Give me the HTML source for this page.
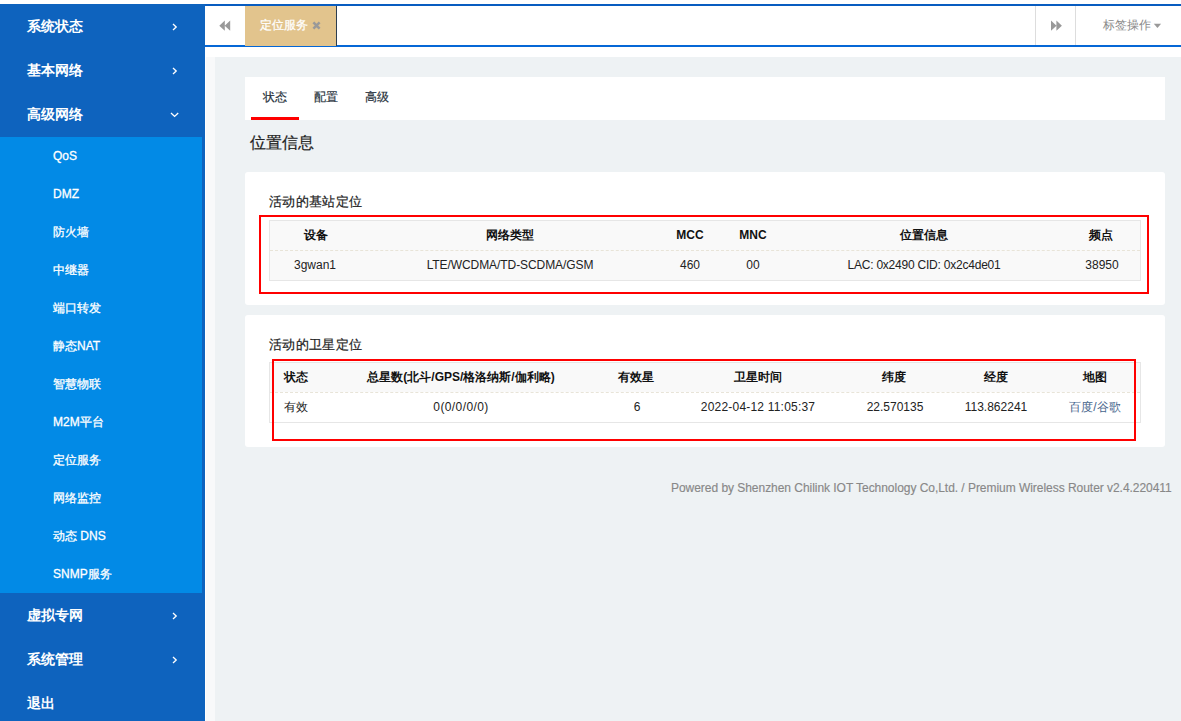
<!DOCTYPE html>
<html><head><meta charset="utf-8">
<style>
*{box-sizing:border-box;margin:0;padding:0}
html,body{width:1181px;height:721px;overflow:hidden;background:#fff;font-family:"Liberation Sans",sans-serif;position:relative}
.abs{position:absolute}
#side{position:absolute;left:0;top:4px;width:205px;height:717px;background:#0e63be;overflow:hidden}
.mi{position:relative;height:44px;color:#fff;font-weight:bold;font-size:14px;line-height:44px;padding-left:27px}
.mi .ch{position:absolute;left:172px;top:19.3px}
.mi .chd{position:absolute;left:170.2px;top:20px}
#sub{background:#028ae6;width:202px}
.si{height:38px;line-height:38px;color:#fff;font-size:12px;padding-left:53px;font-weight:500;-webkit-text-stroke:0.3px #fff}
#tabbar{position:absolute;left:205px;top:4px;width:976px;height:43px;border-top:2px solid #085cc0;border-bottom:2px solid #0567d6;background:#fff}
#content{position:absolute;left:205px;top:47px;width:976px;height:674px;background:#fff}
#bg1{position:absolute;left:1px;top:10px;width:10px;height:664px;background:#f8f9fa}
#bg2{position:absolute;left:10px;top:10px;width:966px;height:664px;background:#eef2f4}
.card{position:absolute;background:#fff;border-radius:3px}
.tab{font-size:12px;line-height:18px;color:#2a3440;-webkit-text-stroke:0.2px #2a3440}
.ttl{font-size:13.4px;letter-spacing:0.35px;line-height:18px;color:#222;-webkit-text-stroke:0.2px #222;white-space:nowrap}
.th{width:200px;text-align:center;font-size:12px;font-weight:bold;line-height:18px;color:#111;white-space:nowrap}
.td{width:200px;text-align:center;font-size:12px;line-height:18px;color:#222;white-space:nowrap}
</style></head><body>
<div id="side">
  <div class="mi">系统状态<svg class="ch" width="6" height="8" viewBox="0 0 6 8"><path d="M1 1 L4.2 4 L1 7" stroke="#fff" stroke-width="1.35" fill="none"/></svg></div>
  <div class="mi">基本网络<svg class="ch" width="6" height="8" viewBox="0 0 6 8"><path d="M1 1 L4.2 4 L1 7" stroke="#fff" stroke-width="1.35" fill="none"/></svg></div>
  <div class="mi">高级网络<svg class="chd" width="9" height="6" viewBox="0 0 9 6"><path d="M1 1 L4.6 4.4 L8.2 1" stroke="#fff" stroke-width="1.35" fill="none"/></svg></div>
  <div id="sub" style="margin-top:1px">
    <div class="si">QoS</div>
    <div class="si">DMZ</div>
    <div class="si">防火墙</div>
    <div class="si">中继器</div>
    <div class="si">端口转发</div>
    <div class="si">静态NAT</div>
    <div class="si">智慧物联</div>
    <div class="si">M2M平台</div>
    <div class="si">定位服务</div>
    <div class="si">网络监控</div>
    <div class="si">动态 DNS</div>
    <div class="si">SNMP服务</div>
  </div>
  <div class="mi">虚拟专网<svg class="ch" width="6" height="8" viewBox="0 0 6 8"><path d="M1 1 L4.2 4 L1 7" stroke="#fff" stroke-width="1.35" fill="none"/></svg></div>
  <div class="mi">系统管理<svg class="ch" width="6" height="8" viewBox="0 0 6 8"><path d="M1 1 L4.2 4 L1 7" stroke="#fff" stroke-width="1.35" fill="none"/></svg></div>
  <div class="mi">退出</div>
</div>
<div id="tabbar">
  <div class="abs" style="left:0;top:0;width:40px;height:39px;text-align:center">
    <svg class="abs" style="left:14px;top:14px" width="12" height="12" viewBox="0 0 12 12"><path d="M5.8 0.6 L0.3 5.65 L5.8 10.7 Z M11.2 0.6 L5.7 5.65 L11.2 10.7 Z" fill="#999"/></svg>
  </div>
  <div class="abs" id="acttab" style="left:40px;top:0;width:92px;height:40px;background:#e2c48d;border-right:1px solid #2c3e50;color:#fff;-webkit-text-stroke:0.25px #fff;font-size:12px;line-height:39px;padding-left:15px">定位服务</div>
  <svg class="abs" style="left:106.5px;top:14.5px" width="9" height="9" viewBox="0 0 9 9"><path d="M1.4 1.4 L7.6 7.6 M7.6 1.4 L1.4 7.6" stroke="#999" stroke-width="2.6" stroke-linecap="butt"/></svg>
  <div class="abs" style="left:830px;top:0;width:1px;height:39px;background:#ddd"></div>
  <div class="abs" style="left:870px;top:0;width:1px;height:39px;background:#ddd"></div>
  <svg class="abs" style="left:846px;top:14px" width="12" height="12" viewBox="0 0 12 12"><path d="M0 0.6 L5.5 5.65 L0 10.7 Z M5.4 0.6 L10.9 5.65 L5.4 10.7 Z" fill="#999"/></svg>
  <div class="abs" style="left:898px;top:0;height:39px;line-height:39px;font-size:12px;color:#888">标签操作</div>
  <svg class="abs" style="left:948px;top:17px" width="9" height="6" viewBox="0 0 9 6"><path d="M0.8 0.8 L8.1 0.8 L4.45 5 Z" fill="#999"/></svg>
</div>
<div id="content">
  <div id="bg1"></div><div id="bg2"></div>
</div>
<div class="abs" style="left:245px;top:77px;width:920px;height:43px;background:#fff"></div>
<div class="abs tab" style="left:263px;top:88px">状态</div>
<div class="abs tab" style="left:314px;top:88px">配置</div>
<div class="abs tab" style="left:365px;top:88px">高级</div>
<div class="abs" style="left:251px;top:117px;width:48px;height:3px;background:#f00"></div>
<div class="abs" style="left:250px;top:132px;font-size:16px;line-height:22px;color:#222;-webkit-text-stroke:0.2px #222">位置信息</div>

<div class="card" style="left:245px;top:172px;width:920px;height:133px"></div>
<div class="abs ttl" style="left:269px;top:193px">活动的基站定位</div>
<div class="abs" style="left:269px;top:220px;width:872px;height:61px;background:#f9f9f9;border:1px solid #e6e6e6"></div>
<div class="abs" style="left:270px;top:250px;width:870px;height:0;border-top:1px dashed #e8e4d8"></div>
<div class="abs" style="left:259px;top:215px;width:890px;height:79px;border:2px solid #f00"></div>
<div class="abs th" style="left:216px;top:226px">设备</div>
<div class="abs th" style="left:410px;top:226px">网络类型</div>
<div class="abs th" style="left:590px;top:226px">MCC</div>
<div class="abs th" style="left:653px;top:226px">MNC</div>
<div class="abs th" style="left:824px;top:226px">位置信息</div>
<div class="abs th" style="left:1001px;top:226px">频点</div>
<div class="abs td" style="left:215px;top:256px">3gwan1</div>
<div class="abs td" style="left:410px;top:256px;letter-spacing:-0.08px">LTE/WCDMA/TD-SCDMA/GSM</div>
<div class="abs td" style="left:590px;top:256px">460</div>
<div class="abs td" style="left:653px;top:256px">00</div>
<div class="abs td" style="left:824px;top:256px;letter-spacing:-0.22px">LAC: 0x2490 CID: 0x2c4de01</div>
<div class="abs td" style="left:1002px;top:256px">38950</div>

<div class="card" style="left:245px;top:315px;width:920px;height:132px"></div>
<div class="abs ttl" style="left:269px;top:336px">活动的卫星定位</div>
<div class="abs" style="left:269px;top:362px;width:872px;height:61px;background:#fff;border:1px solid #e6e6e6"></div>
<div class="abs" style="left:270px;top:363px;width:870px;height:29px;background:#f9f9f9"></div>
<div class="abs" style="left:270px;top:392px;width:870px;height:0;border-top:1px dashed #e8e4d8"></div>
<div class="abs" style="left:272px;top:359px;width:864px;height:82px;border:2px solid #f00"></div>
<div class="abs th" style="left:284px;top:368px;width:auto;text-align:left">状态</div>
<div class="abs th" style="left:361px;top:368px">总星数(北斗/GPS/格洛纳斯/伽利略)</div>
<div class="abs th" style="left:536px;top:368px">有效星</div>
<div class="abs th" style="left:658px;top:368px">卫星时间</div>
<div class="abs th" style="left:794px;top:368px">纬度</div>
<div class="abs th" style="left:896px;top:368px">经度</div>
<div class="abs th" style="left:995px;top:368px">地图</div>
<div class="abs td" style="left:284px;top:398px;width:auto;text-align:left">有效</div>
<div class="abs td" style="left:361px;top:398px;letter-spacing:0.4px">0(0/0/0/0)</div>
<div class="abs td" style="left:537px;top:398px">6</div>
<div class="abs td" style="left:658px;top:398px;letter-spacing:0.2px">2022-04-12 11:05:37</div>
<div class="abs td" style="left:795px;top:398px">22.570135</div>
<div class="abs td" style="left:896px;top:398px">113.862241</div>
<div class="abs td" style="left:995px;top:398px;color:#46658c">百度/谷歌</div>

<div class="abs" style="left:671px;top:479px;font-size:12px;line-height:18px;color:#888;white-space:nowrap;letter-spacing:-0.04px;-webkit-text-stroke:0.15px #888">Powered by Shenzhen Chilink IOT Technology Co,Ltd. / Premium Wireless Router v2.4.220411</div>

</body></html>
